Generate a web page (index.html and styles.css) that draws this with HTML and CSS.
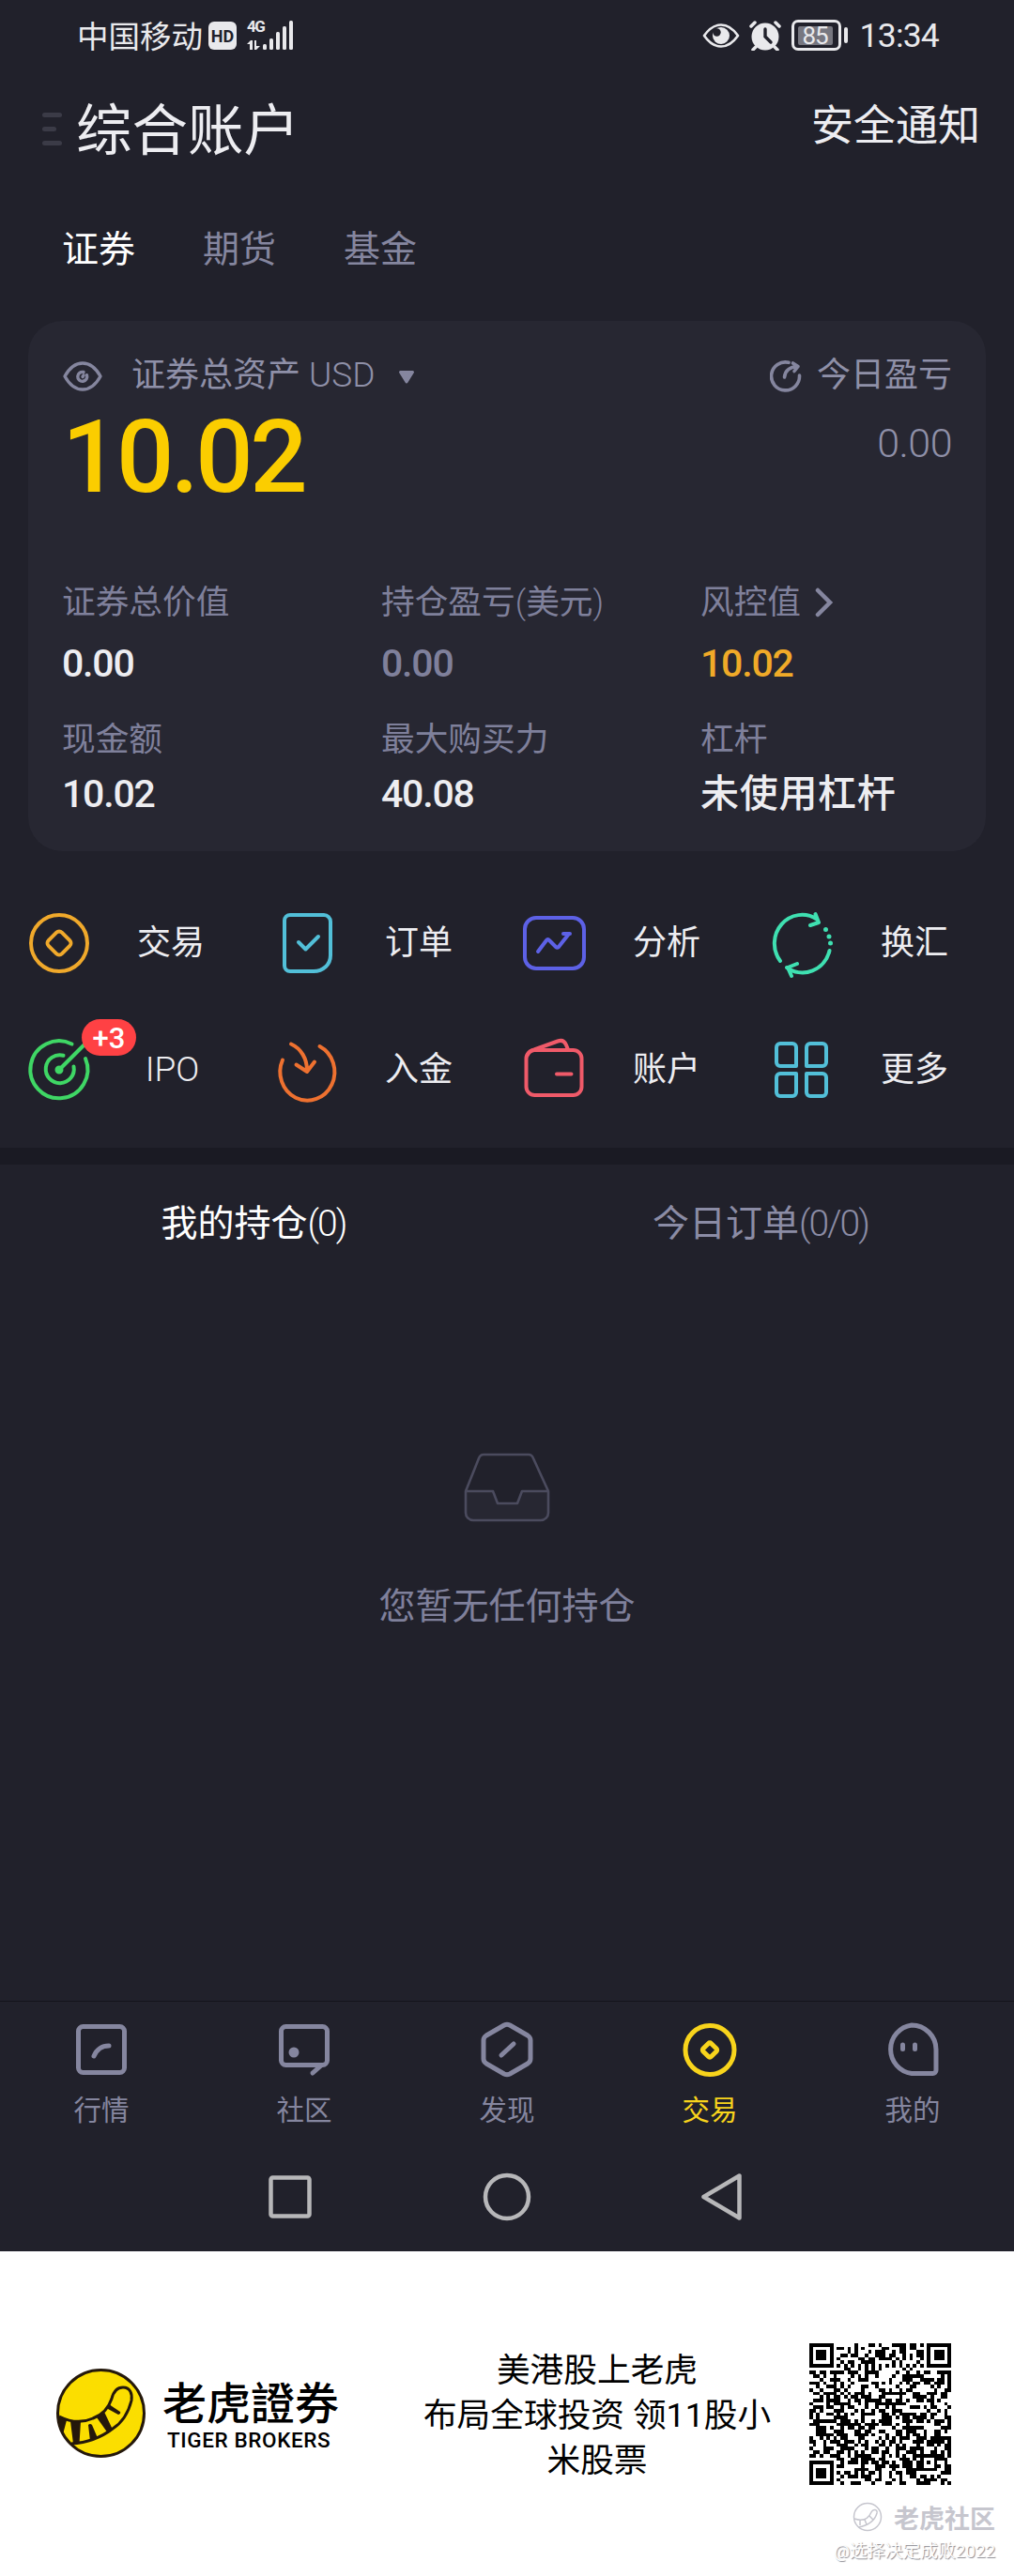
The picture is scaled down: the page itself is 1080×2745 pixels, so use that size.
FILE: index.html
```html
<!DOCTYPE html>
<html lang="zh-CN">
<head>
  <meta charset="UTF-8">
  <meta name="viewport" content="width=device-width, initial-scale=1.0">
  <title>综合账户</title>
  <link rel="stylesheet" href="styles.css">
</head>
<body>
  <div class="app">
    <div class="statusbar">
      <div class="status-left">
        <span class="carrier">中国移动</span>
        <span class="hd">HD</span>
        <span class="net">4G</span>
        <svg class="signal" width="51" height="32" viewBox="0 0 51 32" fill="#e9e9ec">
          <path d="M0 25l4-4h2v10H3v-6zM8 21h2v6h4l-4 4H8z"/>
          <rect x="17" y="25" width="4" height="6" rx="1.5"/>
          <rect x="24" y="19" width="4" height="12" rx="1.5"/>
          <rect x="31" y="12" width="4" height="19" rx="1.5"/>
          <rect x="38" y="6" width="4" height="25" rx="1.5"/>
          <rect x="45" y="0" width="4" height="31" rx="1.5"/>
        </svg>
      </div>
      <div class="status-right">
        <svg width="40" height="30" viewBox="0 0 40 30">
          <path d="M2 15Q10 3.500 20 3.500T38 15Q30 26.500 20 26.500T2 15z" fill="none" stroke="#e9e9ec" stroke-width="2.600" stroke-linejoin="round"/>
          <circle cx="20" cy="15" r="9" fill="#e9e9ec"/>
          <circle cx="15.500" cy="11.500" r="4.200" fill="#21212b"/>
        </svg>
        <svg class="alarm" width="34" height="32" viewBox="0 0 34 32">
          <circle cx="17" cy="17" r="14.500" fill="#e9e9ec"/>
          <path d="M2 6l4-4M32 6l-4-4M7 28l-3 3M27 28l3 3" stroke="#e9e9ec" stroke-width="3.500" stroke-linecap="round"/>
          <path d="M17 9v8l6 6" fill="none" stroke="#21212b" stroke-width="3.400" stroke-linecap="round"/>
        </svg>
        <span class="battery"><span class="battery-level">85</span></span>
        <span class="battery-tip"></span>
        <span class="clock">13:34</span>
      </div>
    </div>

    <div class="header">
      <div class="menu"><i></i><i></i><i></i></div>
      <h1>综合账户</h1>
      <a class="notice">安全通知</a>
    </div>

    <div class="tabs">
      <span class="active">证券</span>
      <span>期货</span>
      <span>基金</span>
    </div>

    <div class="card">
      <div class="card-top">
        <div>
          <div class="row">
            <svg class="eye" width="42" height="34" viewBox="0 0 42 34" fill="none" stroke="#85869f" stroke-linecap="round">
              <path d="M2 17C7 8 13 3 21 3s14 5 19 14c-5 9-11 14-19 14S7 26 2 17z" stroke-width="3.400" stroke-linejoin="round"/>
              <path d="M22 12.500a5 5 0 1 0 3.500 3.200M21 17.500l1-1.500" stroke-width="3.400"/>
            </svg>
            <span>证券总资产 <span class="usd">USD</span></span>
            <svg class="caret" width="18" height="16" viewBox="0 0 18 16"><path d="M2.500 2.500h13L9 13z" fill="#85869f" stroke="#85869f" stroke-width="3" stroke-linejoin="round"/></svg>
          </div>
          <div class="total">10.02</div>
        </div>
        <div class="today">
          <div class="row">
            <svg class="gauge" width="34" height="36" viewBox="0 0 34 36" fill="none" stroke="#85869f" stroke-width="3.600" stroke-linecap="round" stroke-linejoin="round">
              <path d="M20 3.300A15 15 0 1 0 31.500 17"/>
              <path d="M15.500 19C16 13 20 8 30 7.500M24.500 4l5.500 3.500-4 5"/>
            </svg>
            <span>今日盈亏</span>
          </div>
          <div class="today-value">0.00</div>
        </div>
      </div>
      <div class="stats">
        <div><label>证券总价值</label><b>0.00</b></div>
        <div><label>持仓盈亏<span class="paren">(</span>美元<span class="paren">)</span></label><b class="muted">0.00</b></div>
        <div>
          <label>风控值<svg class="chevron" width="20" height="32" viewBox="0 0 20 32"><path d="M3 3l13 13L3 29" fill="none" stroke="#85869f" stroke-width="4.500" stroke-linecap="round"/></svg></label>
          <b class="warn">10.02</b>
        </div>
        <div><label>现金额</label><b>10.02</b></div>
        <div><label>最大购买力</label><b>40.08</b></div>
        <div><label>杠杆</label><b class="cn">未使用杠杆</b></div>
      </div>
    </div>

    <div class="actions">
      <div class="action">
        <svg viewBox="0 0 66 70" stroke="#f0a92b">
          <circle cx="33" cy="35" r="30"/>
          <rect x="23" y="25" width="20" height="20" rx="4" transform="rotate(45 33 35)"/>
        </svg>
        <span>交易</span>
      </div>
      <div class="action">
        <svg viewBox="0 0 66 70" stroke="#52bfd8">
          <path d="M15 5h36a7 7 0 0 1 7 7v36c0 10-8 17-18 17H15a6 6 0 0 1-6-6V11a6 6 0 0 1 6-6z"/>
          <path d="M24 34l7.500 7.500L45 28"/>
        </svg>
        <span>订单</span>
      </div>
      <div class="action">
        <svg viewBox="0 0 66 70" stroke="#5d61e6">
          <rect x="1" y="8" width="63" height="54" rx="12"/>
          <path d="M15 44l9-12c1-1.500 2-1.500 3 0l7 7c1 1 2 1 3 0l11-14M42 25h7"/>
        </svg>
        <span>分析</span>
      </div>
      <div class="action">
        <svg viewBox="0 0 66 70" stroke="#3fe0b1">
          <path d="M9 54A29.500 30.500 0 0 1 48 9.500M46.500 4l3.500 9-9 3"/>
          <path d="M61.500 43A29.500 30.500 0 0 1 16 61M27 57l-10 4 4 9"/>
          <path d="M57.500 20.500v.01M61 28v.01M62.500 35v.01" stroke-width="5"/>
        </svg>
        <span>换汇</span>
      </div>
      <div class="action">
        <svg viewBox="0 0 66 70" stroke="#3fd765">
          <path d="M46.500 7.500A30.500 30.500 0 1 0 61 23"/>
          <path d="M37.500 19.700A15 15 0 1 0 48.500 31.500"/>
          <path d="M33 35L60 8"/>
          <circle cx="33" cy="35" r="2.500" fill="#3fd765"/>
        </svg>
        <em class="badge">+3</em>
        <span class="ipo">IPO</span>
      </div>
      <div class="action">
        <svg viewBox="0 0 66 70" stroke="#ee7130">
          <path d="M7 24.500A29 30.500 0 1 0 46.500 10"/>
          <path d="M16 7.500c11 5 17 16 17 28M21.500 29.500L33 37l8-10.500"/>
        </svg>
        <span>入金</span>
      </div>
      <div class="action">
        <svg viewBox="0 0 66 70" stroke="#f05a69">
          <rect x="2.500" y="14" width="59" height="48" rx="9"/>
          <path d="M4 19c1-3 4-4.500 7-5.500L36 4.500c4-1.500 7-.5 9 4l2 5M35 39.500h15.500"/>
        </svg>
        <span>账户</span>
      </div>
      <div class="action">
        <svg viewBox="0 0 66 70" stroke="#52bfd8">
          <path d="M9 7h13a4 4 0 0 1 4 4v20H9a4 4 0 0 1-4-4V11a4 4 0 0 1 4-4z"/>
          <path d="M41 7h13a4 4 0 0 1 4 4v16a4 4 0 0 1-4 4H37V11a4 4 0 0 1 4-4z"/>
          <path d="M9 39h17v20a4 4 0 0 1-4 4H9a4 4 0 0 1-4-4V43a4 4 0 0 1 4-4z"/>
          <path d="M37 39h17a4 4 0 0 1 4 4v16a4 4 0 0 1-4 4H41a4 4 0 0 1-4-4z"/>
        </svg>
        <span>更多</span>
      </div>
    </div>

    <div class="divider"></div>

    <div class="list-tabs">
      <span class="active">我的持仓<span class="num">(0)</span></span>
      <span>今日订单<span class="num">(0/0)</span></span>
    </div>

    <div class="empty">
      <svg width="92" height="74" viewBox="0 0 92 74" fill="none" stroke="#4b4b5e" stroke-width="2.600" stroke-linejoin="round">
        <path d="M2 41h29l5 13h21l5-13h28v23a8 8 0 0 1-8 8H10a8 8 0 0 1-8-8z" fill="#272732"/>
        <path d="M2 41L16 6q1.500-4 5-4h48q3.500 0 5 4l16 35"/>
      </svg>
      <p>您暂无任何持仓</p>
    </div>

    <div class="tabbar">
      <div>
        <svg viewBox="0 0 60 60">
          <rect x="5.500" y="5.500" width="49" height="49" rx="5"/>
          <path d="M22 37c3-7 8-11 16-11"/>
        </svg>
        <span>行情</span>
      </div>
      <div>
        <svg viewBox="0 0 60 60">
          <rect x="5.500" y="5.500" width="49" height="41" rx="5"/>
          <path d="M48 47l-9 8"/>
          <circle cx="19" cy="33" r="5.500" class="dot"/>
        </svg>
        <span>社区</span>
      </div>
      <div>
        <svg viewBox="0 0 60 60">
          <path d="M27 4q3-1.500 6 0l19 11q3 2 3 5v20q0 3-3 5L33 56q-3 1.500-6 0L8 45q-3-2-3-5V20q0-3 3-5z"/>
          <path d="M24 36l13-12"/>
        </svg>
        <span>发现</span>
      </div>
      <div class="current">
        <svg viewBox="0 0 60 60">
          <circle cx="30" cy="30.500" r="26"/>
          <rect x="24" y="24.500" width="12" height="12" rx="2" transform="rotate(45 30 30.500)"/>
        </svg>
        <span>交易</span>
      </div>
      <div>
        <svg viewBox="0 0 60 60">
          <path d="M29 4a26 26 0 0 1 26 26v22a3.500 3.500 0 0 1-3.500 3.500H29A26 26 0 0 1 29 4z"/>
          <path d="M19.500 25v4.500M32.500 25v4.500"/>
        </svg>
        <span>我的</span>
      </div>
    </div>

    <div class="sysnav">
      <svg viewBox="0 0 60 60"><rect x="8.500" y="9.500" width="41" height="41" rx="2"/></svg>
      <svg viewBox="0 0 60 60"><circle cx="30" cy="30" r="23"/></svg>
      <svg viewBox="0 0 60 60"><path d="M9.500 30L47.500 7.500v45z"/></svg>
    </div>
  </div>

  <div class="promo">
    <div class="brand">
      <svg width="96" height="96" viewBox="0 0 96 96">
        <circle cx="47.500" cy="47.500" r="46" fill="#fbde00"/>
        <g fill="#24180b">
          <path d="M3 51l8 4-4 15-5-10zM15 56h11l-1.500 24h-6.500zM34 60q2-2 4 0l6 14-8 3zM43 52l8-6 9 19-5 4zM55 37l4 3 9 6q1 2-2 3l-11-6z"/>
        </g>
        <path d="M3 51c12 6 25 7 36 2 11-4 17-12 20-21 2-8 6-12 12-12 8 0 10 7 9 14-3 12-9 23-20 30-13 10-28 15-44 16" fill="none" stroke="#24180b" stroke-width="3"/>
        <circle cx="47.500" cy="47.500" r="46" fill="none" stroke="#24180b" stroke-width="3"/>
      </svg>
      <div>
        <div class="brand-cn">老虎證券</div>
        <div class="brand-en">TIGER BROKERS</div>
      </div>
    </div>
    <p class="slogan">美港股上老虎<br>布局全球投资 领11股小<br>米股票</p>
    <svg id="qr" width="151" height="151" viewBox="0 0 41 41" shape-rendering="crispEdges"></svg>
    <div class="watermark">
      <div class="wm-name">
        <svg width="32" height="32" viewBox="0 0 32 32" fill="none" stroke="#c6c6ce" stroke-width="1.500">
          <circle cx="16" cy="16" r="14.500"/>
          <path d="M2 18c9 3 15 0 18-7 2-4 7-3 6 1-2 7-8 13-20 15M8 19v6M13 19l2 5M18 15l4 4"/>
        </svg>
        <span>老虎社区</span>
      </div>
      <div class="wm-user">@选择决定成败2022</div>
    </div>
  </div>

  <script>
    var SIZE = 41
    var seed = 2022
    function next() {
      seed = (seed * 1103515245 + 12345) % 2147483648
      return seed / 2147483648
    }
    // ring pattern used by the corners and the alignment mark
    function ring(x, y, cx, cy, r) {
      var d = Math.max(Math.abs(x - cx), Math.abs(y - cy))
      if (d > r) return null
      return r === 2 ? d !== 1 : d === 3 || d < 2
    }
    function isDark(x, y) {
      var marks = [[3, 3, 4], [37, 3, 4], [3, 37, 4], [34, 34, 2]]
      var fill = next() < 0.5
      for (var i = 0; i < marks.length; i++) {
        var v = ring(x, y, marks[i][0], marks[i][1], marks[i][2])
        if (v !== null) return v
      }
      if (x === 6) return y % 2 === 0
      if (y === 6) return x % 2 === 0
      return fill
    }
    var d = ''
    for (var y = 0; y < SIZE; y++) {
      for (var x = 0; x < SIZE; x++) {
        if (isDark(x, y)) d += 'M' + x + ' ' + y + 'h1v1h-1z'
      }
    }
    document.querySelector('#qr').innerHTML = '<path d="' + d + '"/>'
  </script>
</body>
</html>
```

FILE: styles.css
```css
* {
  box-sizing: border-box;
}
body {
  margin: 0;
  width: 1080px;
  font-family: Roboto, "Noto Sans CJK SC", sans-serif;
  color: #ededf1;
  background: #fff;
}
svg {
  display: block;
  flex: none;
}
.app {
  height: 2399px;
  background: #21212b;
}
.num {
  font-weight: 300;
  letter-spacing: -2px;
}

/* status bar */
.statusbar {
  display: flex;
  justify-content: space-between;
  height: 75px;
  padding: 0 80px 0 82px;
  font-size: 33.500px;
  color: #e9e9ec;
}
.status-left, .status-right {
  display: flex;
  align-items: center;
}
.carrier {
  padding-bottom: 3px;
}
.hd {
  width: 30px;
  height: 30px;
  margin: 0 11px 0 6px;
  border-radius: 6px;
  background: #e9e9ec;
  color: #21212b;
  font-size: 18px;
  font-weight: 700;
  line-height: 31px;
  text-align: center;
}
.net {
  width: 17px;
  margin-right: -17px;
  padding-bottom: 20px;
  font-size: 17px;
  font-weight: 700;
  line-height: 16px;
  letter-spacing: -1.500px;
}
.alarm {
  margin: 0 11px 0 10px;
}
.battery {
  width: 53px;
  height: 33px;
  padding: 4px;
  border: 3px solid #e9e9ec;
  border-radius: 7px;
}
.battery-level {
  display: block;
  width: 37px;
  height: 20px;
  border-radius: 2px;
  background: #777780;
  font-size: 26px;
  line-height: 20px;
  text-align: center;
  letter-spacing: -1px;
}
.battery-tip {
  width: 4px;
  height: 17px;
  margin: 0 13px 0 3px;
  border-radius: 2px;
  background: #e9e9ec;
}
.clock {
  font-size: 35.500px;
  letter-spacing: -0.800px;
}

/* header */
.header {
  display: flex;
  align-items: center;
  height: 125px;
  padding: 0 36px 0 45px;
}
.menu {
  width: 36px;
}
.menu i {
  display: block;
  width: 21px;
  height: 5px;
  margin-bottom: 10px;
  border-radius: 3px;
  background: #3b3b47;
}
.menu i:nth-child(2) {
  width: 15px;
}
.menu i:last-child {
  margin-bottom: 0;
}
h1 {
  margin: 4px 0 0;
  font-size: 59.500px;
  font-weight: 400;
  line-height: 70px;
}
.notice {
  margin-left: auto;
  padding-bottom: 6px;
  font-size: 45px;
  line-height: 50px;
}
.tabs {
  display: flex;
  gap: 72px;
  height: 142px;
  padding: 41px 66px 0;
  font-size: 39px;
  line-height: 50px;
  color: #85869f;
}
.active {
  color: #fff;
}

/* assets card */
.card {
  height: 565px;
  margin: 0 30px;
  padding: 40px 36px;
  border-radius: 36px;
  background: #272732;
}
.card-top {
  display: flex;
  justify-content: space-between;
  height: 240px;
  font-size: 36px;
  line-height: 38px;
  color: #8f90a8;
}
.row {
  display: flex;
  align-items: center;
  height: 38px;
}
.row > span {
  padding-bottom: 2px;
}
.usd {
  font-weight: 300;
  font-size: 37px;
}
.eye {
  margin: 0 31px 0 1px;
}
.caret {
  margin: 2px 0 0 25px;
}
.gauge {
  margin-right: 16px;
}
.total {
  margin: 22px 0 0;
  color: #fbcd00;
  font-size: 108px;
  font-weight: 500;
  line-height: 90px;
  letter-spacing: -3.500px;
}
.today-value {
  margin-top: 32px;
  font-size: 43px;
  font-weight: 300;
  line-height: 40px;
  text-align: right;
  letter-spacing: -0.500px;
}
.stats {
  display: grid;
  grid-template-columns: 340px 340px 1fr;
  row-gap: 41px;
}
.stats label {
  display: flex;
  align-items: center;
  height: 40px;
  font-size: 35.700px;
  line-height: 40px;
  color: #7f809b;
  white-space: nowrap;
}
.paren {
  font-weight: 300;
}
.stats b {
  display: block;
  margin-top: 25px;
  font-size: 41px;
  font-weight: 500;
  line-height: 40px;
  letter-spacing: -1.200px;
}
.stats div:nth-child(n+4) b {
  margin-top: 18px;
}
.stats b.muted {
  color: #7f809b;
}
.stats b.warn {
  color: #f0aa28;
}
.stats b.cn {
  letter-spacing: 0.700px;
}
.chevron {
  margin-left: 15px;
}

/* shortcuts */
.actions {
  display: grid;
  grid-template-columns: repeat(4, 264px);
  row-gap: 65px;
  height: 316px;
  padding: 63px 0 0 30px;
  align-content: start;
}
.action {
  display: flex;
  align-items: center;
  position: relative;
  font-size: 36px;
  line-height: 40px;
}
.action svg {
  width: 66px;
  height: 70px;
  fill: none;
  stroke-width: 4;
  stroke-linecap: round;
  stroke-linejoin: round;
  overflow: visible;
}
.action span {
  width: 172px;
  padding-bottom: 1px;
  text-align: center;
}
.action .ipo {
  padding: 0 0 0 3px;
  font-size: 37px;
  font-weight: 300;
}
.badge {
  position: absolute;
  left: 57px;
  top: -19px;
  width: 58px;
  height: 39px;
  border-radius: 20px;
  background: #ff4144;
  color: #fff;
  font-size: 31px;
  font-style: normal;
  font-weight: 500;
  line-height: 41px;
  text-align: center;
}
.divider {
  height: 18px;
  background: #1a1a23;
}

/* positions */
.list-tabs {
  display: flex;
  height: 124px;
  font-size: 39px;
  line-height: 126px;
  color: #8b8ca5;
}
.list-tabs > span {
  width: 540px;
  text-align: center;
}
.empty {
  display: flex;
  flex-direction: column;
  align-items: center;
  height: 767px;
  padding-top: 183px;
}
.empty p {
  margin: 65px 0 0;
  font-size: 39px;
  line-height: 50px;
  color: #7f809b;
}

/* bottom navigation */
.tabbar {
  display: flex;
  height: 151px;
  padding-top: 21px;
  border-top: 1px solid #14141b;
}
.tabbar div {
  flex: 1;
  display: flex;
  flex-direction: column;
  align-items: center;
  font-size: 29.500px;
  line-height: 40px;
  color: #85869f;
}
.tabbar svg {
  width: 60px;
  height: 60px;
  margin-bottom: 15px;
  fill: none;
  stroke: currentColor;
  stroke-width: 5;
  stroke-linecap: round;
  stroke-linejoin: round;
}
.tabbar .dot {
  fill: currentColor;
  stroke: none;
}
.tabbar .current {
  color: #f8d41c;
}
.sysnav {
  display: flex;
  justify-content: center;
  align-items: center;
  gap: 170px;
  height: 116px;
}
.sysnav svg {
  width: 60px;
  height: 60px;
  fill: none;
  stroke: #b7b7b9;
  stroke-width: 4.500;
  stroke-linejoin: round;
}

/* promo footer */
.promo {
  display: flex;
  position: relative;
  height: 346px;
  color: #000;
}
.brand {
  display: flex;
  width: 437px;
  padding: 125px 0 0 60px;
}
.brand-cn {
  margin: 13px 0 0 17px;
  font-family: Roboto, "Noto Sans CJK TC", sans-serif;
  font-size: 47px;
  font-weight: 500;
  line-height: 50px;
}
.brand-en {
  margin: 0 0 0 22px;
  font-size: 22.500px;
  font-weight: 500;
  line-height: 26px;
  letter-spacing: 0.600px;
  white-space: nowrap;
}
.slogan {
  width: 400px;
  margin: 103px 0 0 -1px;
  font-size: 35.700px;
  line-height: 48px;
  text-align: center;
  white-space: nowrap;
}
#qr {
  margin: 98px 0 0 26px;
}
.watermark {
  position: absolute;
  right: 20px;
  top: 266px;
  color: #c6c6ce;
  text-align: right;
}
.wm-name {
  display: flex;
  align-items: center;
  justify-content: flex-end;
  gap: 12px;
  height: 34px;
  font-size: 27px;
  font-weight: 700;
}
.wm-user {
  margin-top: 6px;
  font-size: 18.800px;
  line-height: 28px;
  color: #fff;
  text-shadow: 1px 1px 1px #8a8a92;
}
```
